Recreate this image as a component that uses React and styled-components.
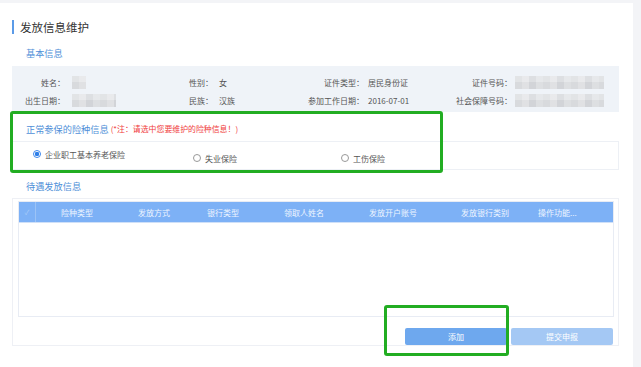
import styled, { createGlobalStyle } from 'styled-components';

const GlobalStyle = createGlobalStyle`
  html, body {
    margin: 0;
    padding: 0;
    background: #f3f4f7;
  }
  body {
    font-family: "Noto Sans CJK SC", "Noto Sans", sans-serif;
    color: #555;
  }
`;

const Page = styled.div`
  width: 641px;
  height: 367px;
  padding-top: 3px;
  box-sizing: border-box;
  overflow: hidden;
`;

const Panel = styled.div`
  position: relative;
  width: 633px;
  height: 364px;
  box-sizing: border-box;
  background: #fff;
  padding: 17px 14px 0 12px;
`;

const TitleRow = styled.div`
  display: flex;
  align-items: center;
  height: 14px;
  gap: 6px;

  &::before {
    content: '';
    width: 2px;
    height: 14px;
    background: #5b9be8;
  }
`;

const Title = styled.h1`
  margin: 0;
  font-size: 11.5px;
  font-weight: 400;
  line-height: 14px;
  color: #333;
`;

const SectionHead = styled.div`
  margin-top: ${(p) => p.$top}px;
  padding-left: 14px;
  height: 14px;
  line-height: 14px;
  font-size: 9.2px;
  color: #4f8fd8;
  display: flex;
  align-items: center;
  gap: 2px;
`;

const Note = styled.span`
  color: #f03c3c;
  font-size: 7.9px;
`;

const InfoBox = styled.div`
  margin-top: 6px;
  height: 46px;
  box-sizing: border-box;
  padding: 7px 0 3px;
  background: #eff3f8;
  display: grid;
  grid-template-columns: 53px 116px 32px 87px 64px 84px 64px 1fr;
  grid-auto-rows: 18px;
  align-items: center;
  font-size: 8px;
`;

const Label = styled.div`
  text-align: right;
  color: #555;
  white-space: nowrap;
`;

const Value = styled.div`
  padding-left: ${(p) => p.$pad || 6}px;
  color: #555;
  white-space: nowrap;
  display: flex;
  align-items: center;
`;

const Blur = styled.div`
  width: ${(p) => p.$w}px;
  height: 13px;
  background:
    linear-gradient(180deg, rgba(255,255,255,0.18) 0 50%, rgba(0,0,0,0.02) 50% 100%),
    repeating-linear-gradient(90deg, #dcdee1 0 7px, #e4e5e8 7px 14px, #d6d8dc 14px 21px, #e1e3e6 21px 28px);
  filter: blur(0.6px);
`;

const RadioBox = styled.div`
  margin-top: 5px;
  height: 29px;
  box-sizing: border-box;
  border: 1px solid #edf0f5;
  display: grid;
  grid-template-columns: 160px 148px 1fr;
  padding-left: 20px;
  font-size: 8px;
  color: #555;
`;

const RadioItem = styled.label`
  display: flex;
  align-items: center;
  gap: 4px;
  align-self: start;
  margin-top: ${(p) => (p.$first ? 6 : 10)}px;
  height: 12px;
`;

const RadioDot = styled.span`
  width: 6px;
  height: 6px;
  border-radius: 50%;
  border: 1px solid ${(p) => (p.$on ? '#3b86ec' : '#999')};
  background: ${(p) =>
    p.$on ? 'radial-gradient(circle, #2f7fe8 0 2px, #fff 2.4px)' : '#fff'};
  flex: none;
`;

const TableBox = styled.div`
  margin-top: 5px;
  height: 148px;
  box-sizing: border-box;
  border: 1px solid #eef0f5;
  padding: 2px 4px 0 5px;
  display: flex;
  flex-direction: column;
`;

const Table = styled.div`
  height: 116px;
  box-sizing: border-box;
  border: 1px solid #e8ecf4;
`;

const HeadRow = styled.div`
  display: grid;
  grid-template-columns: 17px 82px 72px 66px 96px 82px 102px 1fr;
  height: 20px;
  background: #7db1f6;
  border-bottom: 1px solid #cfe0f8;
  font-size: 8px;
  color: #eef5ff;
  align-items: center;
`;

const HeadCell = styled.div`
  text-align: ${(p) => (p.$left ? 'left' : 'center')};
  padding-left: ${(p) => (p.$left ? 2 : 0)}px;
  white-space: nowrap;
`;

const CheckCell = styled.div`
  height: 100%;
  border-right: 1px solid #9cc3f6;
  display: flex;
  align-items: center;
  justify-content: center;
  color: #a9cbf7;
  font-size: 7px;
`;

const Actions = styled.div`
  margin-top: 11px;
  display: flex;
  justify-content: flex-end;
  gap: 4px;
  padding-right: 1px;
`;

const Button = styled.button`
  width: 102px;
  height: 17px;
  border: none;
  border-radius: 2px;
  background: ${(p) => (p.$muted ? '#a4c8f4' : '#6ea8ee')};
  color: #fff;
  font-family: inherit;
  font-size: 8px;
  padding: 0;
`;

const Marker = styled.div`
  position: absolute;
  left: ${(p) => p.$x}px;
  top: ${(p) => p.$y}px;
  width: ${(p) => p.$w}px;
  height: ${(p) => p.$h}px;
  box-sizing: border-box;
  border: 3px solid #22ad22;
  border-radius: 3px;
  pointer-events: none;
`;

const columns = ['险种类型', '发放方式', '银行类型', '领取人姓名', '发放开户账号', '发放银行类别'];

export default function App() {
  return (
    <Page>
      <GlobalStyle />
      <Panel>
        <TitleRow>
          <Title>发放信息维护</Title>
        </TitleRow>

        <SectionHead $top={12}>基本信息</SectionHead>
        <InfoBox>
          <Label>姓名：</Label>
          <Value $pad={7}><Blur $w={14} /></Value>
          <Label>性别：</Label>
          <Value>女</Value>
          <Label>证件类型：</Label>
          <Value $pad={4}>居民身份证</Value>
          <Label>证件号码：</Label>
          <Value $pad={3}><Blur $w={89} /></Value>

          <Label>出生日期：</Label>
          <Value $pad={7}><Blur $w={44} /></Value>
          <Label>民族：</Label>
          <Value>汉族</Value>
          <Label>参加工作日期：</Label>
          <Value $pad={4}>2016-07-01</Value>
          <Label>社会保障号码：</Label>
          <Value $pad={3}><Blur $w={89} /></Value>
        </InfoBox>

        <SectionHead $top={10}>
          正常参保的险种信息
          <Note>(*注：请选中您要维护的险种信息！)</Note>
        </SectionHead>
        <RadioBox>
          <RadioItem $first>
            <RadioDot $on />
            企业职工基本养老保险
          </RadioItem>
          <RadioItem>
            <RadioDot />
            失业保险
          </RadioItem>
          <RadioItem>
            <RadioDot />
            工伤保险
          </RadioItem>
        </RadioBox>

        <SectionHead $top={9}>待遇发放信息</SectionHead>
        <TableBox>
          <Table>
            <HeadRow>
              <CheckCell>✓</CheckCell>
              {columns.map((c) => (
                <HeadCell key={c}>{c}</HeadCell>
              ))}
              <HeadCell $left>操作功能...</HeadCell>
            </HeadRow>
          </Table>
          <Actions>
            <Button>添加</Button>
            <Button $muted>提交申报</Button>
          </Actions>
        </TableBox>

        <Marker $x={10} $y={108} $w={433} $h={62} />
        <Marker $x={384} $y={302} $w={125} $h={51} />
      </Panel>
    </Page>
  );
}
